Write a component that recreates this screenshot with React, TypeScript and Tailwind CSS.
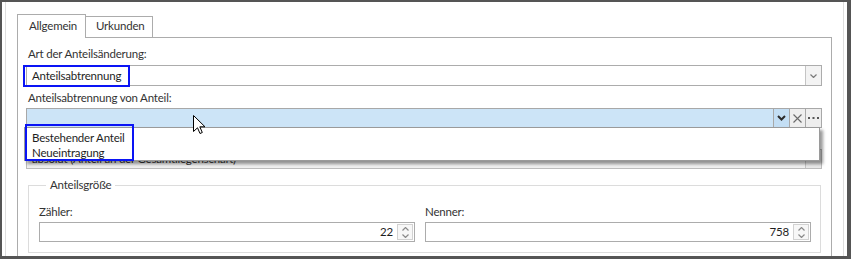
import React from "react";

const ChevSmall = ({ up = false, color = "#7a7a7a" }: { up?: boolean; color?: string }) => (
  <svg width="7" height="4" viewBox="0 0 7 4">
    <path d={up ? "M0.5 3.5 L3.5 0.5 L6.5 3.5" : "M0.5 0.5 L3.5 3.5 L6.5 0.5"} stroke={color} strokeWidth="1.2" fill="none" />
  </svg>
);

const ChevBold = () => (
  <svg width="9" height="6" viewBox="0 0 9 6">
    <path d="M1 1 L4.5 4.5 L8 1" stroke="#2b2b2b" strokeWidth="2" fill="none" />
  </svg>
);

const XIcon = () => (
  <svg width="9" height="9" viewBox="0 0 9 9">
    <path d="M0.5 0.5 L8.5 8.5 M8.5 0.5 L0.5 8.5" stroke="#6a6a6a" strokeWidth="1.1" fill="none" />
  </svg>
);

const Dots = () => (
  <svg width="11" height="2" viewBox="0 0 11 2">
    <rect x="0" y="0" width="2" height="2" fill="#555" />
    <rect x="4.5" y="0" width="2" height="2" fill="#555" />
    <rect x="9" y="0" width="2" height="2" fill="#555" />
  </svg>
);

const Spinner = () => (
  <div className="w-[16px] my-[1px] mr-[1px] border border-[#d2d2d2] bg-[#f7f7f7] flex flex-col items-center justify-center gap-[3px]">
    <ChevSmall up color="#8a8a8a" />
    <ChevSmall color="#8a8a8a" />
  </div>
);

export default function App() {
  return (
    <div className="relative w-[851px] h-[259px] overflow-hidden bg-white border-t-2 border-l-2 border-r-4 border-b-[3px] border-[#555555] font-[family-name:Lato,sans-serif] text-[11.5px] tracking-[-0.2px] leading-[16px] text-[#333333]">
      <div className="h-full mx-[3px] border-x border-[#dedede] px-[11px] pt-[12px] flex flex-col">
        {/* tabs */}
        <div className="flex items-end h-[23px] relative z-10 shrink-0">
          <div className="h-[24px] -mb-px w-[69px] border border-b-0 border-[#acacac] bg-white pl-[11px] pt-[3px]">
            Allgemein
          </div>
          <div className="h-[21px] w-[67px] border-t border-r border-[#acacac] bg-white pl-[10px] pt-[1px]">
            Urkunden
          </div>
        </div>

        {/* panel */}
        <div className="h-[260px] shrink-0 border border-[#acacac] pl-[8px] pr-[9px] pt-[8px] flex flex-col">
          <div className="pl-[2px]">Art der Anteilsänderung:</div>
          <div className="mt-[3px] h-[21px] flex border border-[#acacac] bg-white">
            <div className="flex-1 pl-[5px] leading-[19px] text-[#1e1e1e]">Anteilsabtrennung</div>
            <div className="w-[16px] border-l border-[#c4c4c4] bg-[#f3f3f3] flex items-center justify-center">
              <ChevSmall />
            </div>
          </div>

          <div className="pl-[2px] mt-[4px]">Anteilsabtrennung von Anteil:</div>
          <div className="relative mt-[2px] h-[20px] flex border border-[#a8a8a8] bg-[#cce4f7]">
            <div className="flex-1" />
            <div className="w-[16px] border-l border-[#a8a8a8] bg-[#c3def4] flex items-center justify-center">
              <ChevBold />
            </div>
            <div className="w-[16px] border-l border-[#a8a8a8] bg-[#eeeeee] flex items-center justify-center">
              <XIcon />
            </div>
            <div className="w-[16px] border-l border-[#a8a8a8] bg-[#eeeeee] flex items-center justify-center">
              <Dots />
            </div>
            {/* dropdown popup */}
            <div className="absolute z-20 top-[18px] left-[-3px] right-[1px] h-[34px] border border-[#9a9a9a] bg-white shadow-[3px_3px_3px_rgba(0,0,0,0.4)] pl-[7px] pt-[2px] text-[#1e1e1e] leading-[15px]">
              <div>Bestehender Anteil</div>
              <div>Neueintragung</div>
            </div>
          </div>

          <div className="pl-[2px] mt-[3px]">Anteilsart:</div>
          <div className="mt-[2px] h-[20px] flex border border-[#bcbcbc] bg-[#f0f0f0]">
            <div className="flex-1 pl-[5px] leading-[18px] text-[#333]">absolut (Anteil an der Gesamtliegenschaft)</div>
            <div className="w-[16px] border-l border-[#c4c4c4] bg-[#e8e8e8] flex items-center justify-center">
              <ChevSmall color="#a0a0a0" />
            </div>
          </div>

          <fieldset className="mt-[8px] ml-[2px] mr-[1px] border border-[#dcdcdc] pl-[10px] pr-[9px] pb-[10px]">
            <legend className="ml-[7px] px-[4px] leading-[16px]">Anteilsgröße</legend>
            <div className="grid grid-cols-[376px_386px] gap-x-[10px] pt-[11px]">
              <div>Zähler:</div>
              <div>Nenner:</div>
              <div className="mt-[2px] h-[20px] flex border border-[#acacac] bg-white">
                <div className="flex-1 text-right pr-[4px] leading-[18px] text-[#1e1e1e]">22</div>
                <Spinner />
              </div>
              <div className="mt-[2px] h-[20px] flex border border-[#acacac] bg-white">
                <div className="flex-1 text-right pr-[4px] leading-[18px] text-[#1e1e1e]">758</div>
                <Spinner />
              </div>
            </div>
          </fieldset>
        </div>
      </div>

      {/* annotation rectangles */}
      <div className="absolute z-30 left-[21px] top-[63px] w-[107px] h-[22px] border-2 border-[#0a14f5]" />
      <div className="absolute z-30 left-[23px] top-[122px] w-[109px] h-[37px] border-2 border-[#0a14f5]" />

      {/* mouse cursor */}
      <svg className="absolute z-40 left-[191px] top-[113px]" width="13" height="20" viewBox="0 0 13 20">
        <path d="M0.5 0.5 L0.5 16.5 L4.5 12.8 L7 18.5 L9.3 17.5 L6.8 11.8 L12 11.8 Z" fill="white" stroke="black" strokeWidth="1" strokeLinejoin="miter" />
      </svg>
    </div>
  );
}
